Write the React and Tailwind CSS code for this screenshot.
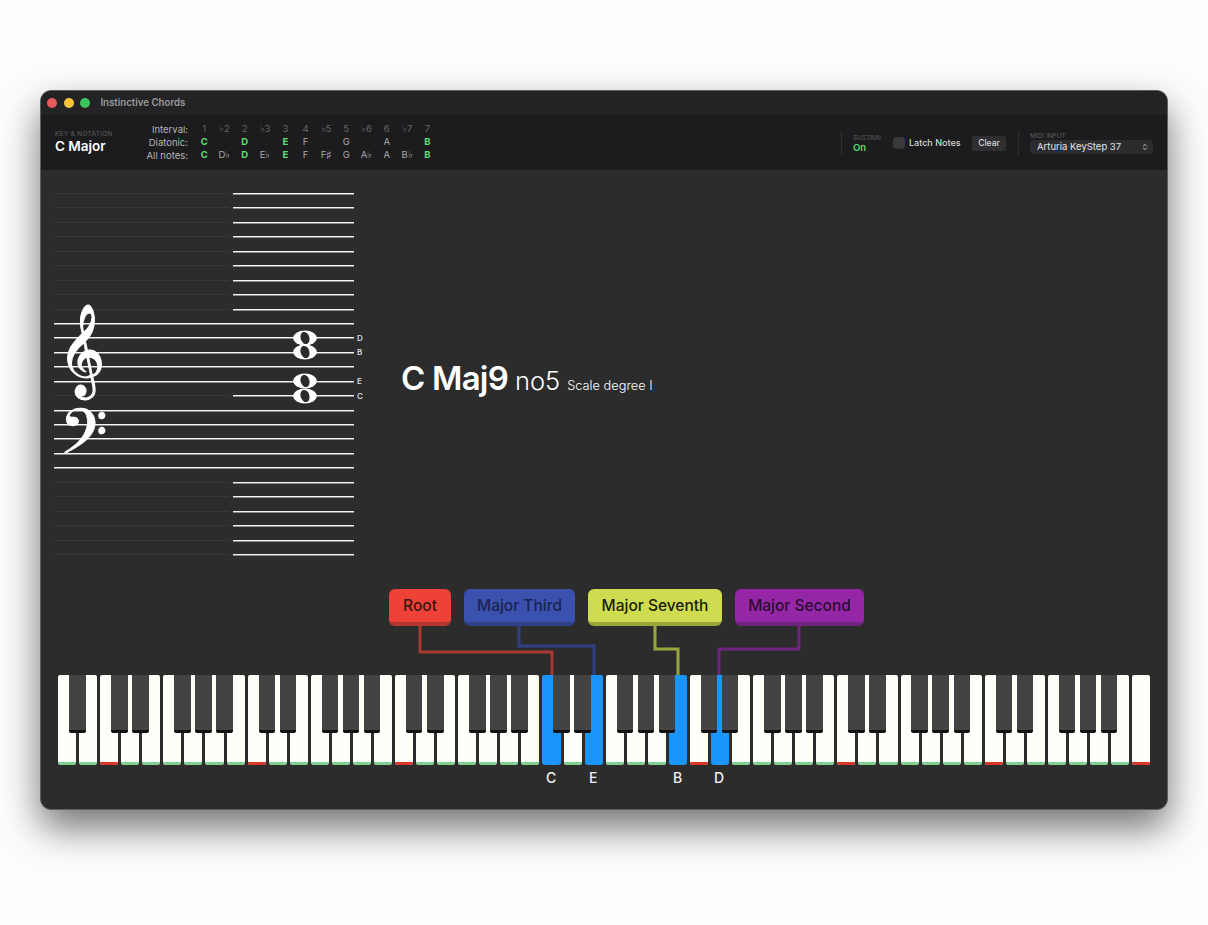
import React from 'react';
import { ChevronsUpDown } from 'lucide-react';

const INTERVALS = ['1', '♭2', '2', '♭3', '3', '4', '♭5', '5', '♭6', '6', '♭7', '7'];
const DIATONIC = ['C', '', 'D', '', 'E', 'F', '', 'G', '', 'A', '', 'B'];
const ALL_NOTES = ['C', 'D♭', 'D', 'E♭', 'E', 'F', 'F♯', 'G', 'A♭', 'A', 'B♭', 'B'];
const GREEN_NOTES = ['C', 'D', 'E', 'B'];

const STAFF_LINES = Array.from({ length: 26 }, (_, i) => i);
const isFullLine = (i) => (i >= 9 && i <= 13) || (i >= 15 && i <= 19);

const TAGS = [
  { label: 'Root', cls: 'w-[62px] bg-[#ee4238] border-[#b5362f] text-[#3a1512]' },
  { label: 'Major Third', cls: 'w-[111px] bg-[#3b51ae] border-[#2f4087] text-[#1a2350]' },
  { label: 'Major Seventh', cls: 'w-[134px] bg-[#cfdc50] border-[#9aa53c] text-[#1a1c0a]' },
  { label: 'Major Second', cls: 'w-[129px] bg-[#9527a7] border-[#6f2580] text-[#2a0c30]' },
];

const WHITE_KEYS = Array.from({ length: 52 }, (_, i) => i);
const ACTIVE_KEYS = [23, 25, 29, 31];
const BLACK_OFFSETS = [11, 32.06, 74.2, 95.2, 116.3];

const blackKeys = () => {
  const lefts = [11];
  for (let o = 0; o < 7; o++) {
    BLACK_OFFSETS.forEach((off) => lefts.push(42.12 + o * 147.42 + off));
  }
  return lefts;
};

const NoteRow = ({ items, muted }) => (
  <div className="flex h-[13px] items-center">
    {items.map((n, i) => (
      <span
        key={i}
        className={`w-[20.3px] text-center text-[9.5px] ${
          muted ? 'text-[#666668]' : GREEN_NOTES.includes(n) ? 'font-bold text-[#5fdc6e]' : 'text-[#a8a8aa]'
        }`}
      >
        {n}
      </span>
    ))}
  </div>
);

const Toolbar = () => (
  <div className="flex h-[55px] items-center bg-[#1c1c1e] pl-[14px] pr-[14px]">
    <div className="flex w-[90px] flex-col">
      <span className="text-[6.5px] uppercase leading-[8px] tracking-[0.3px] text-[#5c5c5e]">Key &amp; Notation</span>
      <span className="text-[13.5px] font-semibold leading-[17px] text-white">C Major</span>
    </div>
    <div className="flex flex-col text-right text-[9.5px] text-[#b4b4b6]">
      <span className="h-[13px] w-[43px] leading-[13px]">Interval:</span>
      <span className="h-[13px] leading-[13px]">Diatonic:</span>
      <span className="h-[13px] leading-[13px]">All notes:</span>
    </div>
    <div className="ml-[6px] flex flex-col">
      <NoteRow items={INTERVALS} muted />
      <NoteRow items={DIATONIC} />
      <NoteRow items={ALL_NOTES} />
    </div>

    <div className="ml-auto flex items-center pt-[1px]">
      <div className="h-[25px] w-px bg-[#2e2e30]" />
      <div className="ml-[11px] mt-[1px] flex w-[40px] flex-col">
        <span className="text-[6.5px] uppercase leading-[8px] text-[#5c5c5e]">Sustain</span>
        <span className="text-[9.5px] font-semibold leading-[12px] text-[#5fdc6e]">On</span>
      </div>
      <div className="h-[12px] w-[12px] rounded-[4px] bg-[#3a3a3c]" />
      <span className="ml-[4px] w-[63px] text-[9px] font-medium text-[#d8d8da]">Latch Notes</span>
      <button className="h-[15px] w-[34px] rounded-[3px] bg-[#2f2f31] text-[8.5px] font-medium text-[#d8d8da]">Clear</button>
      <div className="ml-[12px] h-[25px] w-px bg-[#2e2e30]" />
      <div className="ml-[11px] flex flex-col">
        <span className="text-[6.5px] uppercase leading-[8px] text-[#5c5c5e]">Midi Input</span>
        <div className="flex h-[14px] w-[123px] items-center justify-between rounded-[4px] bg-[#2c2c2e] pl-[7px] pr-[4px]">
          <span className="text-[9.5px] text-[#e4e4e6]">Arturia KeyStep 37</span>
          <ChevronsUpDown className="h-[8px] w-[8px] text-[#d8d8da]" strokeWidth={2.5} />
        </div>
      </div>
    </div>
  </div>
);

const WholeNote = ({ top }) => (
  <svg className="absolute left-[239px] h-[16px] w-[24px]" style={{ top }} viewBox="0 0 24 16">
    <ellipse cx="12" cy="8" rx="11.8" ry="7.4" fill="#fff" />
    <ellipse cx="12" cy="8" rx="4.4" ry="6.2" fill="#2c2c2c" transform="rotate(-18 12 8)" />
  </svg>
);

const NoteLabel = ({ top, children }) => (
  <span className="absolute left-[303px] text-[8px] font-medium leading-[10px] text-[#e8e8e8]" style={{ top }}>
    {children}
  </span>
);

const Staff = () => (
  <div className="relative flex h-[362px] w-[300px] flex-col justify-between">
    {STAFF_LINES.map((i) =>
      isFullLine(i) ? (
        <div key={i} className="h-px w-full bg-[#f4f4f4] shadow-[0_1px_0_#8a8a8a]" />
      ) : (
        <div key={i} className="flex h-px w-full justify-between">
          <div className="h-full w-[175px] bg-[#383838]" />
          <div className="h-full w-[121px] bg-[#f4f4f4] shadow-[0_1px_0_#8a8a8a]" />
        </div>
      )
    )}
    <span
      className="absolute left-[4px] top-[101px] text-[80px] leading-[112px] text-white [-webkit-text-stroke:1px_white]"
      style={{ fontFamily: '"DejaVu Sans"' }}
    >
      𝄞
    </span>
    <span
      className="absolute left-[5px] top-[212px] text-[76px] leading-[70px] text-white [-webkit-text-stroke:0.5px_white]"
      style={{ fontFamily: '"DejaVu Sans"' }}
    >
      𝄢
    </span>
    <WholeNote top={137} />
    <WholeNote top={151} />
    <WholeNote top={180} />
    <WholeNote top={195} />
    <NoteLabel top={140}>D</NoteLabel>
    <NoteLabel top={154}>B</NoteLabel>
    <NoteLabel top={183}>E</NoteLabel>
    <NoteLabel top={198}>C</NoteLabel>
  </div>
);

const Connectors = () => (
  <svg className="absolute left-0 top-0 h-[49px] w-[1128px]" viewBox="0 0 1128 49" fill="none" strokeWidth="3">
    <path d="M379 0V26H511V49" stroke="#a63a33" />
    <path d="M478 0V20H553V49" stroke="#2f4087" />
    <path d="M614 0V23H637V49" stroke="#9aa53c" />
    <path d="M758 0V23H678V49" stroke="#6f2580" />
  </svg>
);

const Keyboard = () => (
  <div className="relative ml-[17px] flex h-[90px] w-[1092px] gap-[3px]">
    {WHITE_KEYS.map((i) => {
      const active = ACTIVE_KEYS.includes(i);
      const isC = i % 7 === 2;
      return (
        <div
          key={i}
          className={`flex h-full flex-1 flex-col justify-end overflow-hidden rounded-t-[2px] rounded-b-[3px] ${active ? 'bg-[#1a96fb]' : 'bg-[#fffffa]'}`}
        >
          {!active && <div className={`h-[3.5px] ${isC ? 'bg-[#dc3528]' : 'bg-[#7fcf8f]'}`} />}
        </div>
      );
    })}
    {blackKeys().map((left) => (
      <div
        key={left}
        className="absolute top-0 h-[58px] w-[16.5px] rounded-b-[2px] border-b-[3px] border-[#111111] bg-[#434343]"
        style={{ left }}
      />
    ))}
  </div>
);

export default function App() {
  return (
    <div className="h-[925px] w-[1208px] bg-[#fdfdfd] pl-[40px] pt-[90px]" style={{ fontFamily: 'Inter, sans-serif' }}>
      <div className="flex h-[720px] w-[1128px] flex-col overflow-hidden rounded-[11px] border border-[#5e5e60] bg-[#2c2c2c] shadow-[0_18px_38px_rgba(0,0,0,0.55)]">
        <div className="flex h-[24px] items-center bg-[#232325] pl-[6px]">
          <div className="flex gap-[6.7px]">
            <span className="h-[10px] w-[10px] rounded-full bg-[#e95b5b]" />
            <span className="h-[10px] w-[10px] rounded-full bg-[#f8c53a]" />
            <span className="h-[10px] w-[10px] rounded-full bg-[#3cc55c]" />
          </div>
          <span className="ml-[10px] text-[9.7px] font-semibold text-[#9a9a9c]">Instinctive Chords</span>
        </div>
        <Toolbar />

        <div className="flex pl-[13px] pt-[23px]">
          <Staff />
          <div className="ml-[47px] flex h-[362px] items-center pt-[10px]">
            <div className="flex items-baseline text-white">
              <span className="text-[33px] font-semibold tracking-[-0.8px]">C Maj9</span>
              <span className="ml-[7px] text-[25.5px] font-light">no5</span>
              <span className="ml-[7px] text-[12.8px] font-light">Scale degree I</span>
            </div>
          </div>
        </div>

        <div className="mt-[34px] flex gap-[13px] pl-[348px]">
          {TAGS.map((t) => (
            <div
              key={t.label}
              className={`flex h-[37px] items-center justify-center rounded-[6px] border-b-[4px] text-[15.5px] font-medium ${t.cls}`}
            >
              {t.label}
            </div>
          ))}
        </div>
        <div className="relative h-[49px]">
          <Connectors />
        </div>
        <Keyboard />
        <div className="relative mt-[2px] h-[20px] text-[14px] font-medium text-[#f2f2f2]">
          <span className="absolute left-[505px]">C</span>
          <span className="absolute left-[548px]">E</span>
          <span className="absolute left-[632px]">B</span>
          <span className="absolute left-[673px]">D</span>
        </div>
      </div>
    </div>
  );
}
